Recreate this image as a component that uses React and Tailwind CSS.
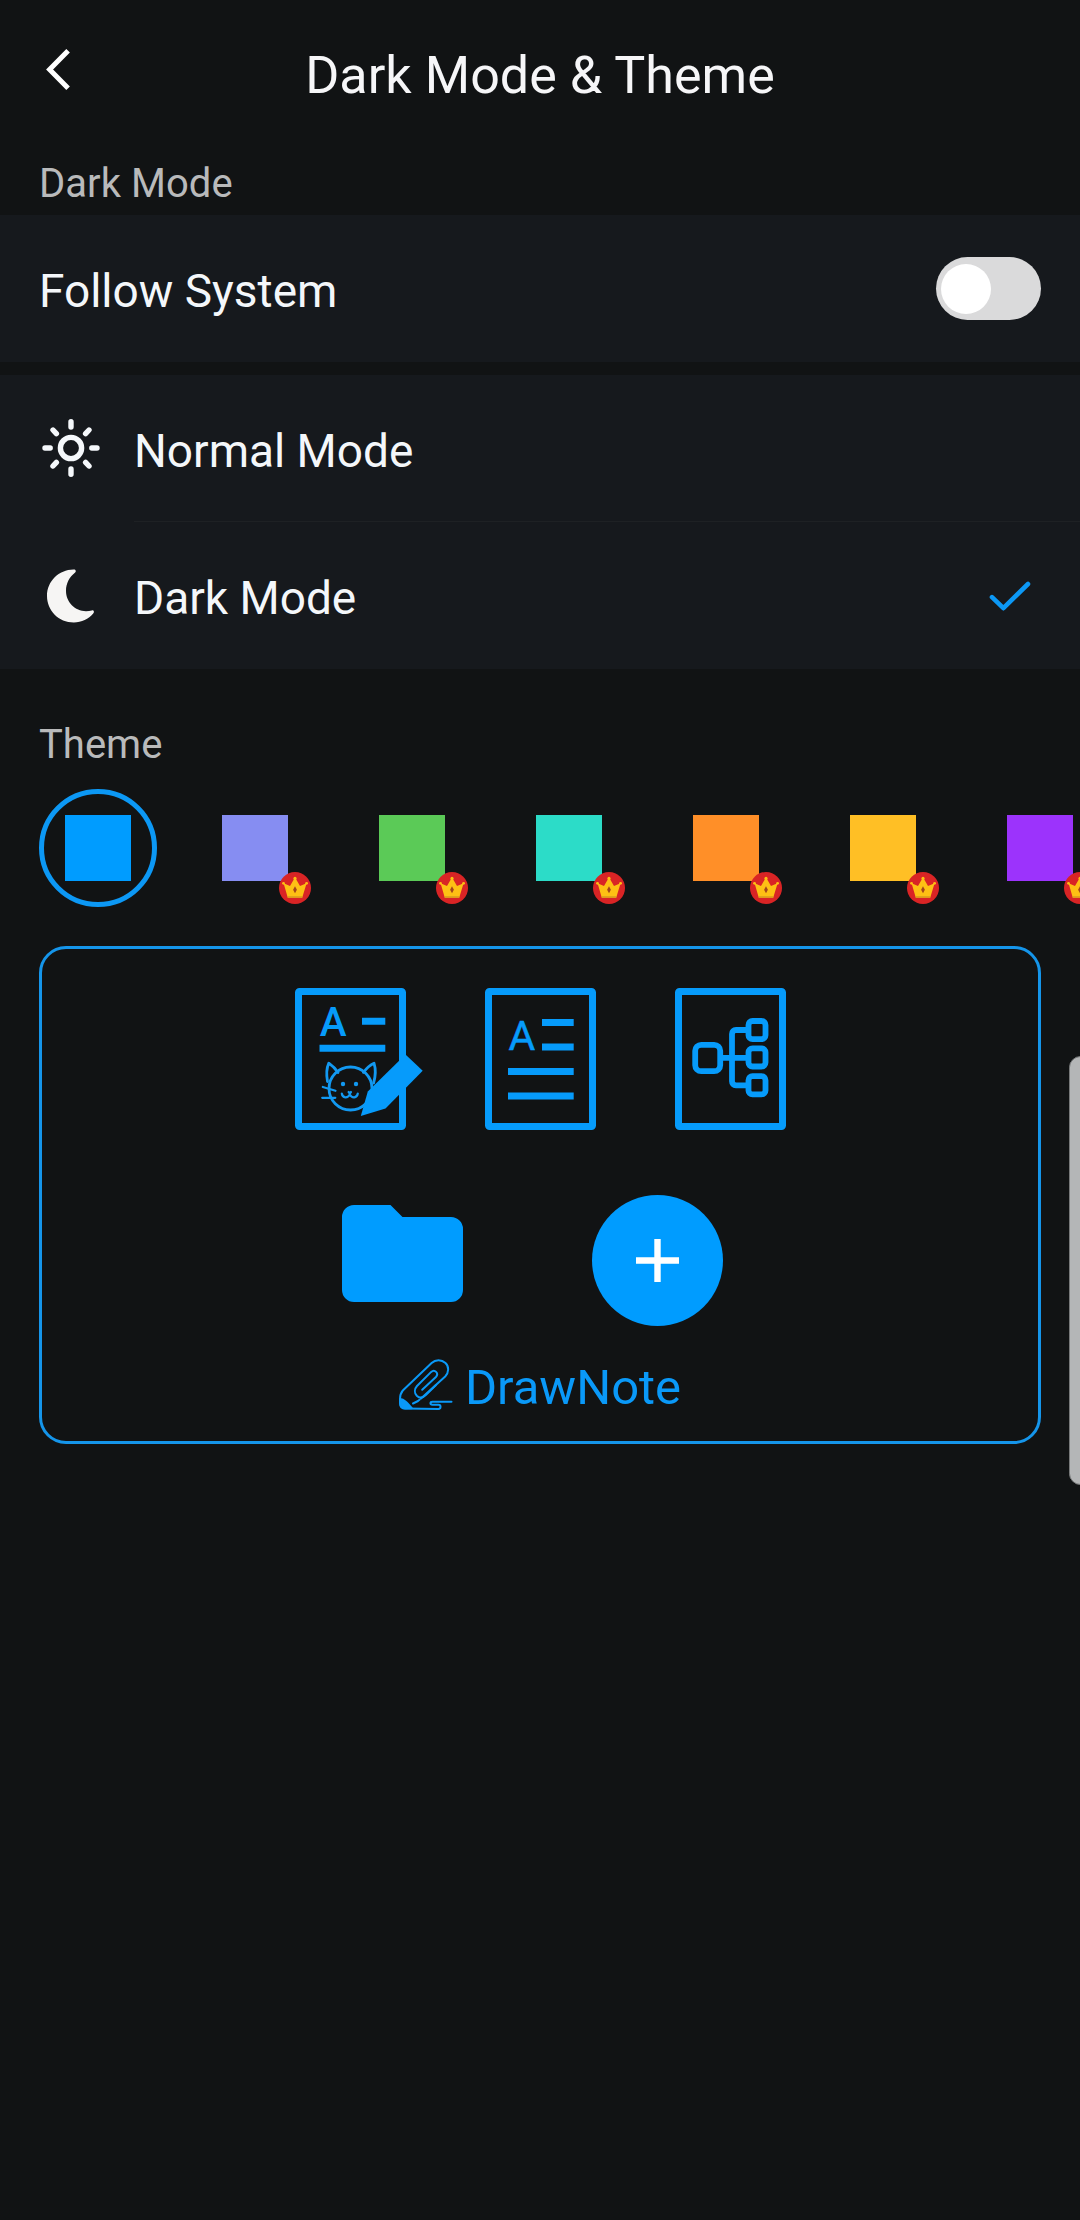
import React from "react";

const swatches = [
  { id: "blue", fill: "bg-[#009cff]", selected: true },
  { id: "lavender", fill: "bg-[#868df2]" },
  { id: "green", fill: "bg-[#5bca57]" },
  { id: "teal", fill: "bg-[#2cdcc8]" },
  { id: "orange", fill: "bg-[#ff8f28]" },
  { id: "amber", fill: "bg-[#ffbf25]" },
  { id: "purple", fill: "bg-[#9c33fc]" },
];

function BackIcon() {
  return (
    <svg className="block h-[41px] w-6" viewBox="0 0 24 41" fill="none" stroke="#fff" strokeWidth="5">
      <path d="M22.1 1.8 3.6 20.5 22.1 39.2" />
    </svg>
  );
}

function SunIcon() {
  return (
    <svg className="block size-[60px]" viewBox="-30 -30 60 60" fill="none" stroke="#f5f8fb" strokeWidth="5.4" strokeLinecap="round">
      <circle r="10.6" />
      <path d="M0-26.2V-21M0 21v5.2M-26 0h5.2M20.8 0H26M-18-18l3.4 3.6M18-18l-3.4 3.6M-18 18l3.4-3.6M18 18l-3.4-3.6" />
    </svg>
  );
}

function MoonIcon() {
  return (
    <svg className="block size-[60px]" viewBox="0 0 60 60" fill="#f6f5f4">
      <path d="M33.5 3.5C35.8 3.2 36.6 5.4 34.9 6.8C29.5 11 26 17.5 26 24.8C26 36.4 35 45.2 46 45.2C48.2 45.2 50 44.9 51.8 44.4C53.9 43.9 54.6 46 53.2 47.6C48.6 53.2 41.6 56.5 33.8 56.5C18.6 56.5 7 44.5 7 30C7 15.2 18.8 3.8 33.5 3.5Z" />
    </svg>
  );
}

function CheckIcon() {
  return (
    <svg className="block h-[30px] w-[42px]" viewBox="0 0 42 30" fill="none" stroke="#0c98f5" strokeWidth="4.6" strokeLinecap="round" strokeLinejoin="round">
      <path d="M3 16.2 14.4 27.2 39 3" />
    </svg>
  );
}

function CrownBadge() {
  return (
    <svg className="absolute left-[83px] top-[83px] size-8" viewBox="0 0 32 32">
      <circle cx="16" cy="16" r="16" fill="#d92425" />
      <g fill="#fec014">
        <path d="M4.6 11.3 11 14 15.2 6.8h1.6L21 14l6.6-2.7-4.4 14.4H8.8Z" />
        <circle cx="16" cy="6.4" r="1.6" />
        <circle cx="4.5" cy="11.3" r="1.4" />
        <circle cx="27.6" cy="11.3" r="1.4" />
      </g>
      <path d="M8.4 24.2h15.2l-.4 1.6H8.8Z" fill="#d99a1c" />
      <path d="m16 14.2 1.9 3.5-1.9 3.5-1.9-3.5Z" fill="#a3461c" />
    </svg>
  );
}

function Frame() {
  return <rect x="3.5" y="3.5" width="104" height="135" rx="1" fill="none" stroke="#069bfb" strokeWidth="7" />;
}

function DrawingNoteIcon() {
  return (
    <svg className="block h-[142px] w-[111px] overflow-visible" viewBox="0 0 111 142" fill="none">
      <Frame />
      <text x="38.3" y="48" textAnchor="middle" fontSize="40.5" fontWeight="500" fontFamily="Roboto, sans-serif" fill="#069bfb">A</text>
      <path d="M67 33.2h23.3M24.5 60.3h65.8" stroke="#069bfb" strokeWidth="7" />
      <g stroke="#1299f2" strokeWidth="2.8" strokeLinecap="round" strokeLinejoin="round">
        <circle cx="55.5" cy="100.5" r="21.5" />
        <path d="M32.5 93.5C31.3 87 31.4 80.5 33.8 75.2C37.5 77.8 41 81.5 43 84.6M68.4 84.3C71.5 80.3 75.5 76.8 79 75.2C81 81.5 80.5 88.5 78.6 95" />
        <path d="M27.8 99 40.5 102.8M27.2 109.8H40.3M46.8 105.5C47.5 110.2 52.5 110.6 54.8 106.5C57 110.6 62 110.2 62.8 105.5M53.6 104l1.2 1.5 1.2-1.5" strokeWidth="2.2" />
      </g>
      <circle cx="48" cy="96" r="2.2" fill="#1299f2" />
      <circle cx="61" cy="96" r="2.2" fill="#1299f2" />
      <path d="M110.5 66.5 127.7 82.8 90.5 120.5 65.8 128 72.8 103.5Z" fill="#069bfb" />
    </svg>
  );
}

function TextNoteIcon() {
  return (
    <svg className="block h-[142px] w-[111px]" viewBox="0 0 111 142">
      <Frame />
      <text x="36.8" y="62.4" textAnchor="middle" fontSize="41" fontWeight="400" fontFamily="Roboto, sans-serif" fill="#069bfb" stroke="#069bfb" strokeWidth=".5">A</text>
      <path d="M57 34.4h31.7M57 59h31.7M23 83.4h65.7M23 108h65.7" stroke="#069bfb" strokeWidth="7" />
    </svg>
  );
}

function MindMapIcon() {
  return (
    <svg className="block h-[142px] w-[111px]" viewBox="0 0 111 142">
      <Frame />
      <g fill="none" stroke="#069bfb" strokeWidth="5.8">
        <rect x="20.2" y="56.8" width="25" height="26.4" rx="6" />
        <rect x="73.5" y="33" width="17" height="18.2" rx="4" />
        <rect x="73.5" y="60.3" width="17" height="18.2" rx="4" />
        <rect x="73.5" y="88.2" width="17" height="18.2" rx="4" />
        <path d="M45.5 69.8h28M73.5 42H61c-2.4 0-4 1.6-4 4v47.3c0 2.4 1.6 4 4 4h12.5" />
      </g>
    </svg>
  );
}

function FolderIcon() {
  return (
    <svg className="block h-[97px] w-[121px]" viewBox="0 0 121 97" fill="#009cff">
      <path d="M12 0H48.5L60.5 12H109a12 12 0 0 1 12 12V85a12 12 0 0 1-12 12H12A12 12 0 0 1 0 85V12A12 12 0 0 1 12 0Z" />
    </svg>
  );
}

function PencilLogo() {
  return (
    <svg className="block h-[51px] w-[54px]" viewBox="0 0 54 51" fill="none" stroke="#0a99f8" strokeWidth="2" strokeLinecap="round" strokeLinejoin="round">
      <path d="M14 44.5 19 42 20.5 40.8M22 39.6 46.2 17.5C50 13.5 50.2 7.5 46.5 4C42.5.2 36.5.3 32.6 4L3.8 31.5C1.5 34.2 1 36.5 1 40V44C1 47.6 3 49.6 6.4 49.6L39.5 50C42.2 50 42.2 45.7 39.5 45.7H33.4C30.8 45.7 30.8 42.8 33.4 42.8H52.5" />
      <path d="M23.2 30.8 36.9 18C40.3 14.2 35.6 9.8 32.2 12.9L18 27C15.3 30 15.2 34 17.8 36.7C20.5 39.3 24 38.8 26.8 36L37 26" />
      <path d="M1.2 40C5 40.5 7.5 43 12.8 49.2L6 49.5C3 49.5 1.2 47 1.2 44Z" fill="#0a99f8" />
    </svg>
  );
}

export default function App() {
  return (
    <div className="relative h-[2220px] w-[1080px] overflow-hidden bg-[#111314] font-['Roboto',sans-serif] text-[#f4f7fa]">
      <header className="grid h-[150px] grid-cols-[100px_1fr_100px] items-center">
        <button className="mb-[11px] ml-[46px] w-6" aria-label="Back">
          <BackIcon />
        </button>
        <h1 className="pt-0.5 text-center text-[52px] leading-[60px] font-normal tracking-[0.05px] text-[#f6f6f8]">Dark Mode &amp; Theme</h1>
      </header>

      <h2 className="flex h-[65px] items-center pt-0.5 pl-[39px] text-[40px] leading-[48px] font-normal tracking-[0.05px] text-[#b9babb]">Dark Mode</h2>

      <section className="flex h-[147px] items-center justify-between bg-[#16191d] pr-[39px] pl-[39px]">
        <span className="pt-1 text-[46px] leading-[54px]">Follow System</span>
        <button className="flex h-[63px] w-[105px] items-center rounded-full bg-[#dadadb] pl-[5px]" role="switch" aria-checked="false" aria-label="Follow System">
          <span className="size-[50px] rounded-full bg-white" />
        </button>
      </section>

      <section className="mt-[13px] h-[294px] bg-[#16191d]">
        <div className="flex h-[146px] items-center pl-[41px]">
          <SunIcon />
          <span className="ml-[33px] pt-[5px] text-[46px] leading-[54px]">Normal Mode</span>
        </div>
        <div className="ml-[134px] h-px bg-[#1e2124]" />
        <div className="flex h-[147px] items-center pr-[49px] pl-10">
          <MoonIcon />
          <span className="ml-[34px] pt-[5px] text-[46px] leading-[54px]">Dark Mode</span>
          <span className="ml-auto">
            <CheckIcon />
          </span>
        </div>
      </section>

      <h2 className="mt-[52px] pl-[39px] text-[40px] leading-[48px] font-normal text-[#b9babb]">Theme</h2>

      <div className="mt-5 flex h-[118px] gap-[39px] pl-[39px]">
        {swatches.map((s) => (
          <div
            key={s.id}
            className={
              s.selected
                ? "relative flex size-[118px] shrink-0 items-center justify-center rounded-full border-[5px] border-[#0c98f5]"
                : "relative flex size-[118px] shrink-0 items-center justify-center"
            }
          >
            <div className={"size-[66px] " + s.fill} />
            {!s.selected && <CrownBadge />}
          </div>
        ))}
      </div>

      <section className="mx-[39px] mt-[39px] flex h-[498px] flex-col items-center rounded-[27px] border-[3px] border-[#1595ea] pt-[39px]">
        <div className="flex gap-[79px]">
          <DrawingNoteIcon />
          <TextNoteIcon />
          <MindMapIcon />
        </div>
        <div className="mt-[65px] mr-[15px] flex gap-[129px]">
          <div className="pt-[10px]">
            <FolderIcon />
          </div>
          <div className="flex size-[131px] items-center justify-center rounded-full bg-[#009cff]">
            <svg className="size-[43px]" viewBox="0 0 43 43" stroke="#fff" strokeWidth="6.4">
              <path d="M21.5 0v43M0 21.5h43" />
            </svg>
          </div>
        </div>
        <div className="mt-[30px] flex items-start">
          <div className="pt-[3px]">
            <PencilLogo />
          </div>
          <span className="ml-3 pt-[3px] text-[49px] leading-[58px] text-[#0a99f8]">DrawNote</span>
        </div>
      </section>

      {/* Edge panel handle floating over the screen edge */}
      <div className="absolute top-[1056px] -right-3 h-[429px] w-[23px] rounded-[12px] border border-[#77797a] bg-[#b4b6b7]" />
    </div>
  );
}
